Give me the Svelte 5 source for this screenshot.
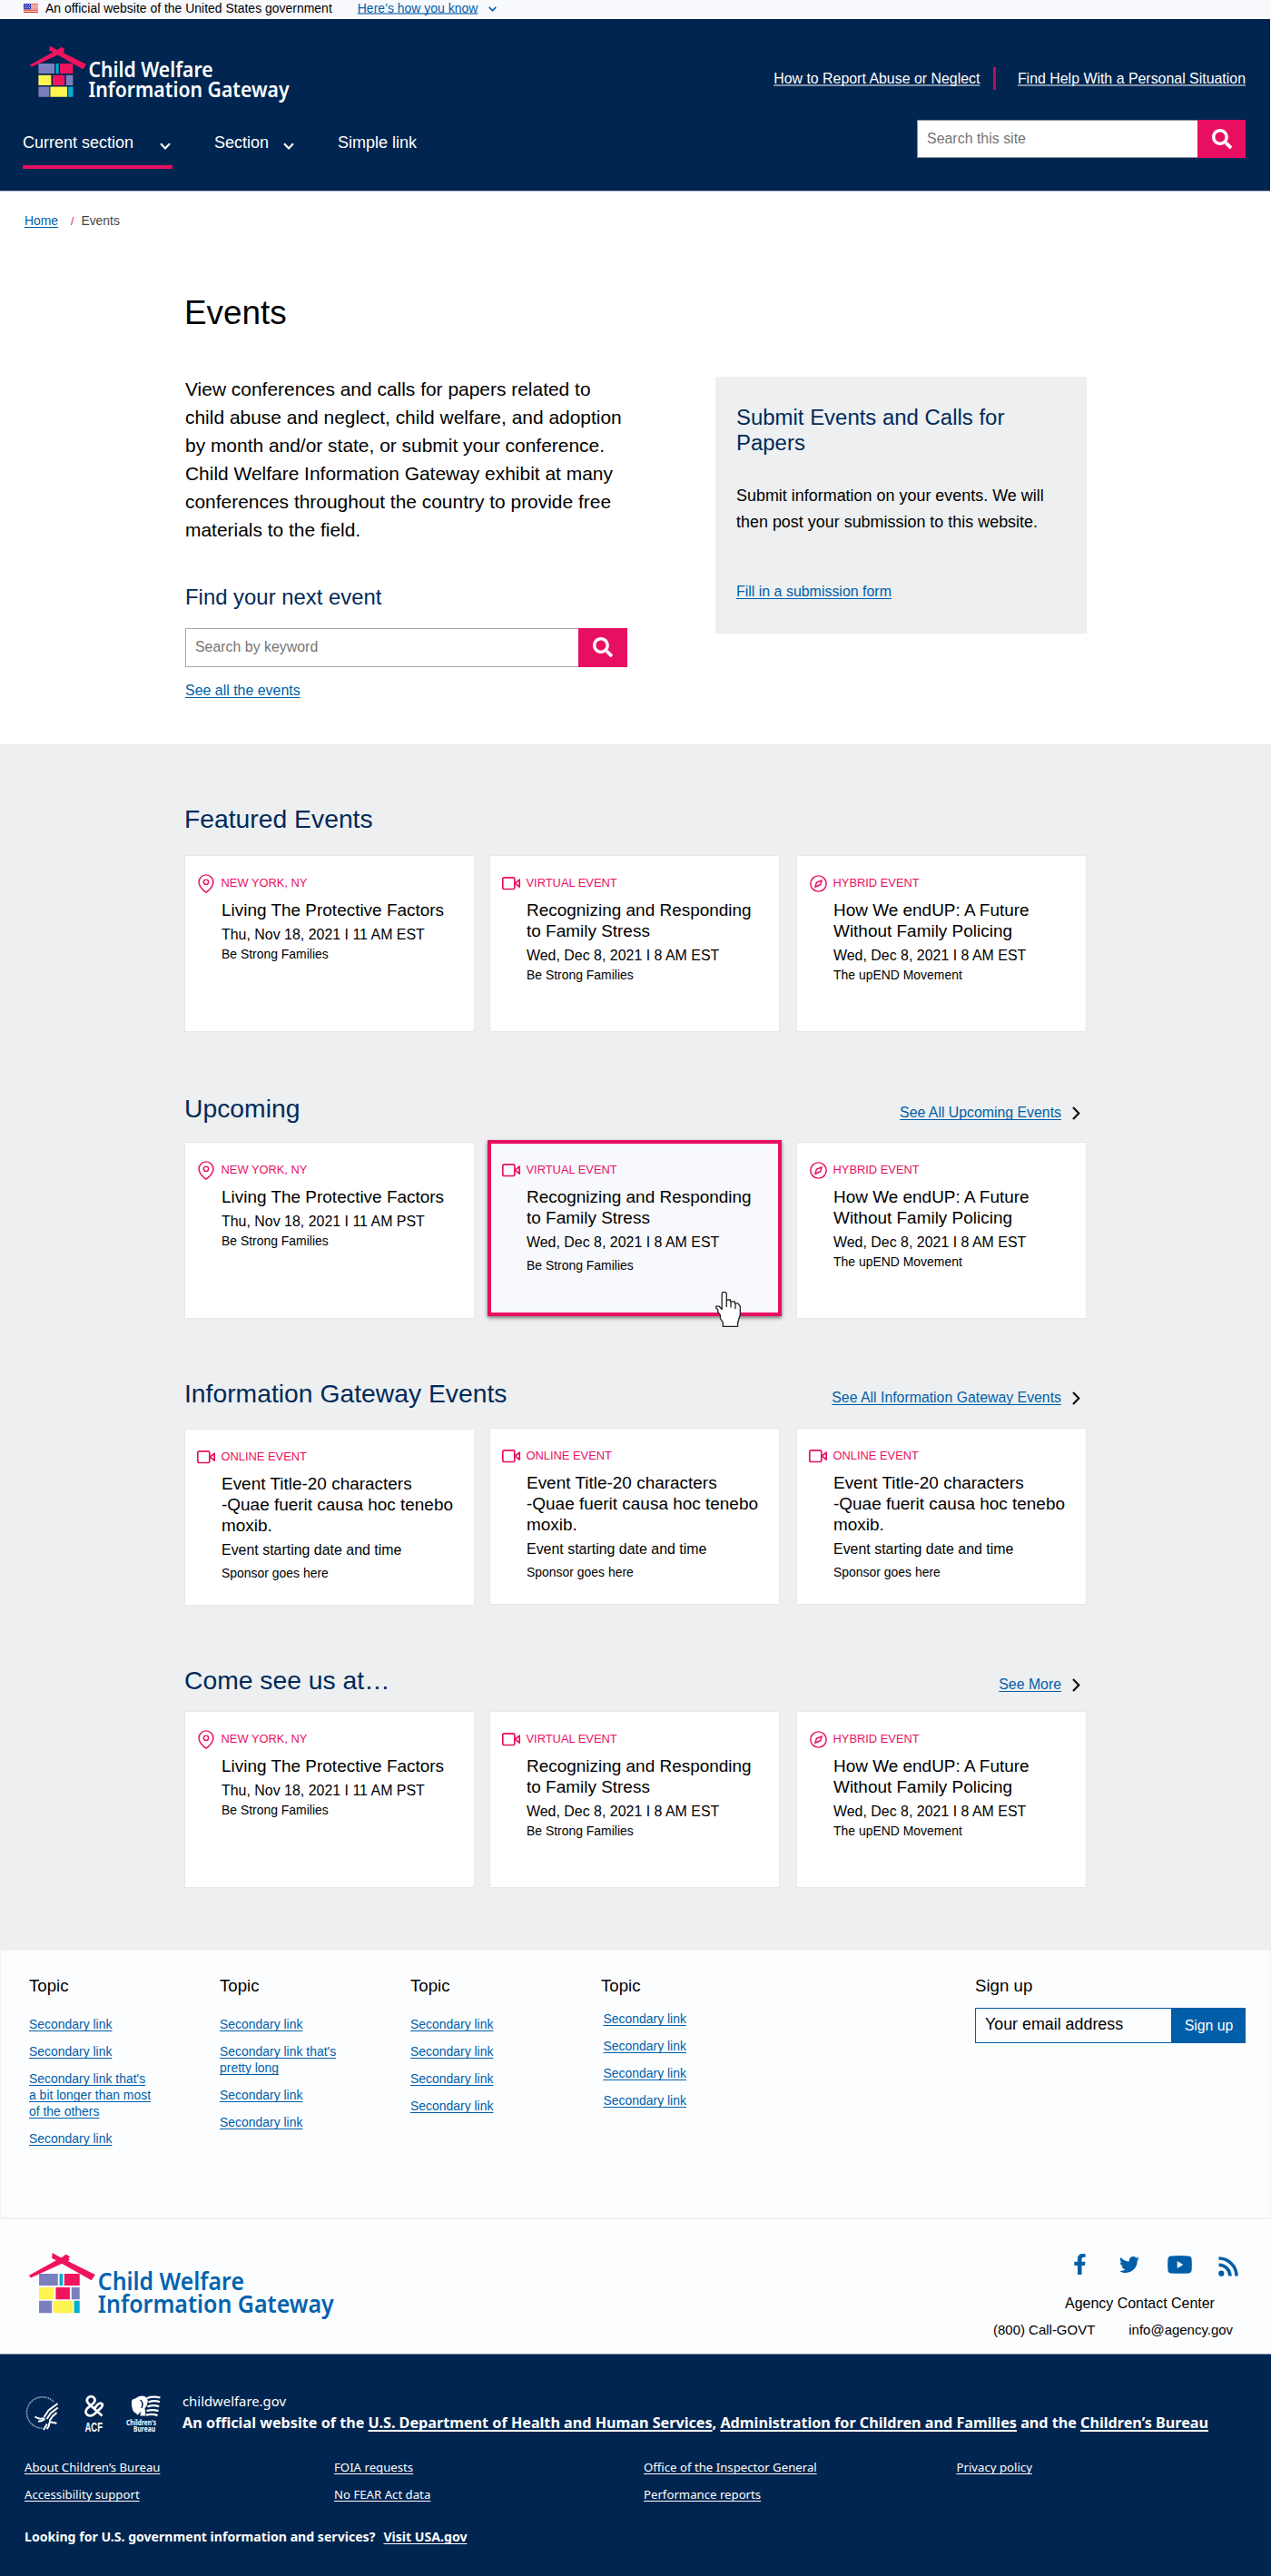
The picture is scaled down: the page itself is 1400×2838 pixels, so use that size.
<script>
  const ny = (zone) => ({
    kind: 'pin', label: 'NEW YORK, NY', title: 'Living The Protective Factors',
    date: `Thu, Nov 18, 2021 I 11 AM ${zone}`, sponsor: 'Be Strong Families'
  });
  const virtual = {
    kind: 'video', label: 'VIRTUAL EVENT', title: 'Recognizing and Responding\nto Family Stress',
    date: 'Wed, Dec 8, 2021 I 8 AM EST', sponsor: 'Be Strong Families'
  };
  const hybrid = {
    kind: 'compass', label: 'HYBRID EVENT', title: 'How We endUP: A Future\nWithout Family Policing',
    date: 'Wed, Dec 8, 2021 I 8 AM EST', sponsor: 'The upEND Movement'
  };
  const online = {
    kind: 'video', label: 'ONLINE EVENT', title: 'Event Title-20 characters\n-Quae fuerit causa hoc tenebo\nmoxib.',
    date: 'Event starting date and time', sponsor: 'Sponsor goes here'
  };

  const groups = [
    { id: 'featured', heading: 'Featured Events', more: '', events: [ny('EST'), virtual, hybrid] },
    { id: 'upcoming', heading: 'Upcoming', more: 'See All Upcoming Events', events: [ny('PST'), { ...virtual, active: true }, hybrid] },
    { id: 'gateway', heading: 'Information Gateway Events', more: 'See All Information Gateway Events', events: [online, online, online] },
    { id: 'visit', heading: 'Come see us at…', more: 'See More', events: [ny('PST'), virtual, hybrid] }
  ];

  const s = 'Secondary link';
  const topics = [
    [s, s, "Secondary link that's\na bit longer than most\nof the others", s],
    [s, "Secondary link that's\npretty long", s, s],
    [s, s, s, s],
    [s, s, s, s]
  ];

  const legal = [
    ['About Children’s Bureau', 'Accessibility support'],
    ['FOIA requests', 'No FEAR Act data'],
    ['Office of the Inspector General', 'Performance reports'],
    ['Privacy policy']
  ];
</script>

{#snippet logo(cls)}
  <svg class="logo {cls}" viewBox="33 48 290 67" role="img" aria-label="Child Welfare Information Gateway">
    <g fill="#f0145f">
      <path d="M33 71.5 34.6 73.8 71 57.3 70 55.6 71.4 54 67.6 51.8 64.6 54 Z" />
      <path d="M54.8 50.4 62 54.4 95 70.8 91.4 76.2 59.5 58.2 54.4 55.4Z" />
      <path d="M66 70h14.4v11H66zM58 82.7h13.2V94H58z" />
    </g>
    <path fill="#7c7fbe" d="M42.4 70H60v11H42.4zM72.8 82.7h7.6V94h-7.6zM42.4 95.4h12v11.4h-12z" />
    <path fill="#fff450" d="M42.4 82.7h14V94h-14zM55.4 95.4h18.7v11.4H55.4z" />
    <path fill="#00aed6" d="M61.5 70h3.2v11h-3.2zM75.2 95.4h5.2v11.4h-5.2z" />
    <text x="97.5" y="85" textLength="137" lengthAdjust="spacingAndGlyphs">Child Welfare</text>
    <text x="97.5" y="106.7" textLength="221" lengthAdjust="spacingAndGlyphs">Information Gateway</text>
  </svg>
{/snippet}

{#snippet chevron(cls)}
  <svg class={cls} viewBox="0 0 12 8" aria-hidden="true"><path d="M1 1.2 6 6.4 11 1.2" fill="none" stroke="currentColor" stroke-width="2.1" /></svg>
{/snippet}

{#snippet search()}
  <svg class="glass" viewBox="0 0 512 512" aria-hidden="true"><path fill="#fff" d="M505 442.700L405.300 343c-4.500-4.500-10.600-7-17-7H372c27.600-35.300 44-79.700 44-128C416 93.100 322.900 0 208 0S0 93.100 0 208s93.100 208 208 208c48.300 0 92.700-16.400 128-44v16.300c0 6.400 2.500 12.500 7 17l99.700 99.700c9.400 9.400 24.600 9.400 33.900 0l28.300-28.300c9.400-9.400 9.400-24.600.1-34zM208 336c-70.700 0-128-57.200-128-128 0-70.700 57.200-128 128-128 70.700 0 128 57.200 128 128 0 70.700-57.200 128-128 128z" /></svg>
{/snippet}

{#snippet kindIcon(kind)}
  <span class="kind">
    {#if kind === 'pin'}
      <svg width="18" height="21" viewBox="2 0 20 24"><path d="M21 10c0 7-9 13-9 13s-9-6-9-13a9 9 0 0 1 18 0z" /><circle cx="12" cy="10" r="3" /></svg>
    {:else if kind === 'video'}
      <svg width="20" height="15" viewBox="0 0 20 15"><rect x=".8" y=".9" width="13" height="12.600" rx="1.500" /><path d="m19.200 3.200-4.800 4 4.800 4z" /></svg>
    {:else}
      <svg width="19" height="19" viewBox="1 1 22 22"><circle cx="12" cy="12" r="10" /><path d="m16.200 7.800-1.600 5.600-6.800 2.900 1.800-5.700z" /></svg>
    {/if}
  </span>
{/snippet}

<div class="page">
  <div class="banner">
    <svg class="flag" width="16" height="11" viewBox="0 0 16 11" aria-hidden="true">
      <path fill="#fff" d="M0 0h16v11H0z" />
      <path fill="#e0351f" d="M0 0h16v1.100H0zM0 2.200h16v1.100H0zM0 4.400h16v1.100H0zM0 6.600h16v1.100H0zM0 8.800h16v1.100H0z" />
      <path fill="#2432ae" d="M0 0h8v6.200H0z" />
      <path fill="#fff" d="M1 1h1v1H1zM3.500 1h1v1h-1zM6 1h1v1H6zM2.200 2.700h1v1h-1zM4.800 2.700h1v1h-1zM1 4.300h1v1H1zM3.500 4.300h1v1h-1zM6 4.300h1v1H6z" />
    </svg>
    <span>An official website of the United States government</span>
    <a href="#know">Here’s how you know</a>
    {@render chevron('tiny')}
  </div>

  <header>
    <div class="brand">
      {@render logo('light')}
      <nav>
        <a class="current" href="#current">Current section {@render chevron('drop')}</a>
        <a class="section" href="#section">Section {@render chevron('drop')}</a>
        <a href="#simple">Simple link</a>
      </nav>
    </div>
    <div class="tools">
      <div class="help">
        <a href="#report">How to Report Abuse or Neglect</a>
        <i></i>
        <a href="#help">Find Help With a Personal Situation</a>
      </div>
      <div class="search site">
        <span class="field">Search this site</span>
        <button aria-label="Search">{@render search()}</button>
      </div>
    </div>
  </header>

  <main>
    <section class="intro">
      <div class="crumbs"><a href="#home">Home</a><i>/</i><span>Events</span></div>
      <h1>Events</h1>
      <div class="split">
        <div class="about">
          <p>View conferences and calls for papers related to child abuse and neglect, child welfare, and adoption by month and/or state, or submit your conference. Child Welfare Information Gateway exhibit at many conferences throughout the country to provide free materials to the field.</p>
          <h3>Find your next event</h3>
          <div class="search keyword">
            <span class="field">Search by keyword</span>
            <button aria-label="Search">{@render search()}</button>
          </div>
          <a class="all" href="#all">See all the events</a>
        </div>
        <aside>
          <h3>Submit Events and Calls for Papers</h3>
          <p>Submit information on your events. We will then post your submission to this website.</p>
          <a href="#form">Fill in a submission form</a>
        </aside>
      </div>
    </section>

    <div class="listing">
      {#each groups as group}
        <section class="group {group.id}">
          <div class="head">
            <h2>{group.heading}</h2>
            {#if group.more}
              <div class="more">
                <a href="#{group.id}">{group.more}</a>
                <svg width="9" height="15" viewBox="0 0 9 15" aria-hidden="true"><path d="M1 1l6.300 6.500L1 14" fill="none" stroke="#111" stroke-width="2.200" /></svg>
              </div>
            {/if}
          </div>
          <div class="cards">
            {#each group.events as event}
              <article class="card" class:active={event.active}>
                <div class="label">{@render kindIcon(event.kind)}<span>{event.label}</span></div>
                <div class="body">
                  <h4>{event.title}</h4>
                  <p class="date">{event.date}</p>
                  <p class="sponsor">{event.sponsor}</p>
                </div>
                {#if event.active}
                  <svg class="pointer" viewBox="0 0 28 39" aria-hidden="true">
                    <path d="M8.300 38.300V34L5.500 29.500V26L2.800 22.500V20L.8 18v-1.800h3.400L7.200 19.500V2.200L8.200.7h3L12.300 2.200V9h4.200v1.800h4.800v2h3.500L27.300 16v9.500l-1.300 4-1.400 5.500v3.300z" fill="#fff" stroke="#222" stroke-width="1.300" stroke-linejoin="round" />
                    <path d="M12.300 9v8M17 11v6.500M22 13v6" fill="none" stroke="#222" stroke-width="1.300" />
                  </svg>
                {/if}
              </article>
            {/each}
          </div>
        </section>
      {/each}
    </div>
  </main>

  <footer>
    <div class="topics">
      {#each topics as links}
        <div class="topic">
          <h5>Topic</h5>
          <ul>
            {#each links as link}<li><a href="#topic">{link}</a></li>{/each}
          </ul>
        </div>
      {/each}
      <form class="signup">
        <h5>Sign up</h5>
        <div class="row"><span>Your email address</span><button type="button">Sign up</button></div>
      </form>
    </div>

    <div class="agency">
      {@render logo('blue')}
      <div class="contact">
        <div class="social">
          <svg class="fb" viewBox="22 0 276 512"><path d="M279.140 288l14.220-92.660h-88.910v-60.130c0-25.350 12.420-50.060 52.240-50.060h40.420V6.260S260.430 0 225.360 0c-73.220 0-121.080 44.380-121.080 124.720v70.620H22.890V288h81.390v224h100.170V288z" /></svg>
          <svg class="tw" viewBox="0 48 512 416"><path d="M459.370 151.716c.325 4.548.325 9.097.325 13.645 0 138.720-105.583 298.558-298.558 298.558-59.452 0-114.680-17.219-161.137-47.106 8.447.974 16.568 1.299 25.340 1.299 49.055 0 94.213-16.568 130.274-44.832-46.132-.975-84.792-31.188-98.112-72.772 6.498.974 12.995 1.624 19.818 1.624 9.421 0 18.843-1.300 27.614-3.573-48.081-9.747-84.143-51.980-84.143-102.985v-1.299c13.969 7.797 30.214 12.670 47.431 13.319-28.264-18.843-46.781-51.005-46.781-87.391 0-19.492 5.197-37.360 14.294-52.954 51.655 63.675 129.300 105.258 216.365 109.807-1.624-7.797-2.599-15.918-2.599-24.040 0-57.828 46.782-104.934 104.934-104.934 30.213 0 57.502 12.670 76.670 33.137 23.715-4.548 46.456-13.320 66.599-25.340-7.798 24.366-24.366 44.833-46.132 57.827 21.117-2.273 41.584-8.122 60.426-16.243-14.292 20.791-32.161 39.308-52.628 54.253z" /></svg>
          <svg class="yt" viewBox="0 0 27 20"><path fill-rule="evenodd" d="M4 .5Q13.500-.3 23 .5q3.300.3 3.600 3.500.5 6 0 12-.3 3.200-3.600 3.500-9.500.7-19 0Q.7 19.200.4 16q-.5-6 0-12Q.7.8 4 .5zM10.700 6v8l6.600-4z" /></svg>
          <svg class="rss" viewBox="0 0 22 22"><circle cx="3.300" cy="18.700" r="3.100" /><path d="M.5 9.200A12.300 12.300 0 0 1 12.900 21.500M.5 2A19.500 19.500 0 0 1 20 21.500" fill="none" stroke="#005ea8" stroke-width="3.600" /></svg>
        </div>
        <p class="center">Agency Contact Center</p>
        <p class="reach"><span>(800) Call-GOVT</span><span>info@agency.gov</span></p>
      </div>
    </div>

    <div class="identifier">
      <div class="owner">
        <svg class="hhs" width="37" height="38" viewBox="0 0 37 38" aria-hidden="true" fill="none" stroke="#fff">
          <path d="M31 6A17.200 17.200 0 1 0 19 35.200" stroke="#9fb0c8" stroke-width="1.600" stroke-dasharray="1.300 .8" />
          <path d="M35.500 8 25.500 15.500 20.500 23M35.800 12.500 28 18.500 23.500 25M34.500 18 30 22 26.500 27M10.500 22.500q5 3.500 10 1.500M14 27.500q5 .5 7.500-3M20 37l3.800-6.500M23.500 36q2.500-2 3-7M26 28l8.500 1.700" stroke-width="2" />
        </svg>
        <svg class="acf" width="24" height="46" viewBox="0 0 24 46" aria-hidden="true">
          <path d="M20.500 22.500 5.500 9Q2.300 5.200 5 2.600 8.300-.2 11.500 2.600 14 5.600 10.500 9L4 14.500Q.8 18.500 4 21.300 8 24 12 20.500L19.500 13.500Q22.800 9.200 18.800 8.600 15.500 8.800 12.600 14" fill="none" stroke="#fff" stroke-width="2.700" />
          <text x="1.500" y="39.500" textLength="19.500" lengthAdjust="spacingAndGlyphs">ACF</text>
        </svg>
        <svg class="bureau" width="39" height="46" viewBox="0 0 39 46" aria-hidden="true">
          <path fill="#fff" d="M6 9Q5 4 10 3.500 15-.5 20 1q4.500 1.500 3.500 7-.5 4-3 6l1 8.500h-6l.5-5Q11.500 24 11.500 20 6 18.500 6 9z" />
          <path d="M15.500 5q4 3 1.500 9" fill="none" stroke="#002550" stroke-width="1.500" />
          <path d="M23 3q7-2.500 14.500-.5M24.500 7.500q6.500-2.500 12.500-.2M23.500 12.300q7-2.200 12.700 0M22.500 17q7-2 13 .2M22 21.700q7-1.700 12.500.4" fill="none" stroke="#fff" stroke-width="2.300" />
          <text x="0" y="33.200" textLength="33" lengthAdjust="spacingAndGlyphs">Children's</text>
          <text x="8" y="40" textLength="24" lengthAdjust="spacingAndGlyphs">Bureau</text>
        </svg>
        <div class="statement">
          <p class="domain">childwelfare.gov</p>
          <p class="official">An official website of the <a href="#hhs">U.S. Department of Health and Human Services</a>, <a href="#acf">Administration for Children and Families</a> and the <a href="#cb">Children’s Bureau</a></p>
        </div>
      </div>
      <div class="legal">
        {#each legal as column}
          <div>{#each column as item}<a href="#legal">{item}</a>{/each}</div>
        {/each}
      </div>
      <p class="usa"><span>Looking for U.S. government information and services?</span><a href="#usa">Visit USA.gov</a></p>
    </div>
  </footer>
</div>

<style>
  :global(body) { margin: 0; background: #fff; }
  .page {
    width: 1400px; height: 2838px;
    font-family: "Liberation Sans", Arial, sans-serif; color: #000;
  }
  h1, h2, h3, h4, h5, p, ul { margin: 0; padding: 0; font-weight: 400; }
  ul { list-style: none; }
  i { font-style: normal; }
  svg { display: block; flex: none; overflow: visible; }
  a { color: #005ea8; text-decoration: underline 1px; text-underline-offset: 2px; text-decoration-skip-ink: none; }
  button { border: 0; padding: 0; margin: 0; font: inherit; }

  .banner { display: flex; align-items: flex-start; height: 21px; padding-left: 26px; background: #f8f9fc; font-size: 13.980px; line-height: 18px; white-space: nowrap; }
  .flag { margin: 4px 8px 0 0; }
  .banner a { margin-left: 28px; text-decoration-color: #6d9fca; text-decoration-thickness: 2px; text-underline-offset: 0; }
  .tiny { width: 9px; height: 6px; margin: 7px 0 0 12px; color: #005ea8; }

  header { display: flex; justify-content: space-between; height: 189px; margin-right: 1px; padding: 0 27px 0 25px; background: #002550; border-bottom: 1px solid #a9b4d0; }
  .logo text { font-family: "Noto Sans", sans-serif; font-weight: 600; font-size: 22.500px; }
  .light { width: 290px; height: 67px; margin: 27px 0 0 8px; }
  .light text { fill: #fff; }
  .blue { width: 341px; height: 79px; margin-top: 34px; }
  .blue text { fill: #0063ad; }
  nav { display: flex; margin-top: 30px; font-size: 18px; line-height: 24px; }
  nav a { display: flex; color: #fff; text-decoration: none; white-space: nowrap; }
  .drop { width: 12px; height: 8px; margin-top: 12px; }
  .current { justify-content: space-between; width: 163px; padding: 0 2px 13px 0; margin-right: 46px; border-bottom: 4.500px solid #e80f62; }
  .section { width: 88px; justify-content: space-between; margin-right: 48px; }
  .tools { padding-top: 53px; }
  .help { display: flex; align-items: center; justify-content: flex-end; height: 25px; font-size: 15.920px; line-height: 20px; }
  .help a { color: #fff; text-decoration: underline 2px #7f92a8; text-underline-offset: 1px; }
  .help i { width: 2.500px; height: 25px; margin: 0 24px 0 15px; background: #b31159; }
  .search { display: flex; box-sizing: border-box; }
  .search .field { flex: 1; box-sizing: border-box; background: #fff; border: 1.500px solid #b4b4b4; border-right: 0; color: #757575; }
  .search button { display: flex; align-items: center; justify-content: center; background: #e80f62; }
  .site { width: 362px; height: 42px; margin: 33px 0 0 auto; }
  .site .field { padding-left: 10px; font-size: 15.940px; line-height: 40px; border-color: #8a8f98; }
  .site button { width: 53px; }
  .glass { width: 22px; height: 22px; }

  .intro { height: 609px; box-sizing: border-box; padding-top: 22px; }
  .crumbs { display: flex; height: 20px; padding-left: 27px; font-size: 13.900px; line-height: 20px; }
  .crumbs i { margin: 0 8px 0 14px; color: #e80f62; font-size: 12px; line-height: 22px; }
  .crumbs span { color: #444; }
  h1 { margin: 70px 0 0 203px; font-size: 36.900px; line-height: 44px; }
  .split { display: flex; justify-content: space-between; width: 993px; margin: 46px 0 0 204px; }
  .about { width: 487px; }
  .about p { width: 484px; font-size: 20.950px; line-height: 31px; }
  h3, h2 { color: #002a59; }
  .about h3 { margin-top: 45px; font-size: 23.900px; line-height: 28px; }
  .keyword { height: 42.500px; margin-top: 20px; }
  .keyword .field { padding-left: 10px; font-size: 15.920px; line-height: 39px; border-color: #a8a8a8; }
  .keyword button { width: 54px; }
  .all { display: block; width: max-content; margin-top: 16.500px; font-size: 15.950px; line-height: 20px; }
  aside { box-sizing: border-box; width: 409px; height: 283px; margin-top: 2px; padding: 31px 23px 0; background: #edeff0; }
  aside h3 { font-size: 23.950px; line-height: 28px; }
  aside p { margin-top: 29.500px; font-size: 17.950px; line-height: 29px; }
  aside a { display: block; width: max-content; margin-top: 52px; font-size: 15.940px; line-height: 20px; }

  .listing { box-sizing: border-box; height: 1328px; padding: 65px 203px 0; background: #edeff0; }
  .head { display: flex; justify-content: space-between; align-items: baseline; height: 34px; }
  h2 { font-size: 28.300px; line-height: 34px; }
  .more { display: flex; align-items: center; gap: 12px; padding-right: 7px; font-size: 15.850px; line-height: 20px; }
  .cards { display: grid; grid-template-columns: 336px 338px 320px; height: 195px; margin-top: 23px; }
  .upcoming { margin-top: 67px; }
  .upcoming .cards { margin-top: 20px; }
  .gateway { margin-top: 65px; }
  .gateway .cards { margin-top: 21px; }
  .gateway .card:first-child { margin-top: 1px; }
  .visit { margin-top: 66px; }
  .visit .cards { margin-top: 17px; }
  .card { position: relative; box-sizing: border-box; width: 320px; height: 195px; padding: 21px 0 0 11px; background: #fff; border: 1px solid #e6e8e9; }
  .card.active { width: 324px; height: 194px; margin: -2px 0 0 -2px; padding: 20px 0 0 10px; background: #f8f9fc; border: 4px solid #e80f62; box-shadow: 0 2px 4px rgba(0, 0, 0, .5); }
  .label { display: flex; align-items: center; height: 18px; color: #e80f62; font-size: 12.880px; line-height: 18px; }
  .kind { display: flex; justify-content: center; width: 24px; margin-right: 4.500px; }
  .kind svg { fill: none; stroke: #e80f62; stroke-width: 1.700; stroke-linejoin: round; }
  .body { padding: 9px 0 0 29px; }
  h4 { font-size: 18.970px; line-height: 23px; white-space: pre-line; }
  .date { margin-top: 5.500px; font-size: 15.950px; line-height: 20px; }
  .sponsor { margin-top: 2.500px; font-size: 13.950px; line-height: 18px; }
  .active .sponsor, .gateway .sponsor { margin-top: 6.500px; }
  .pointer { position: absolute; left: 247px; top: 163px; width: 28px; height: 39px; }

  footer { background: #fcfdff; }
  .topics { display: flex; box-sizing: border-box; height: 297px; padding: 27px 27px 0 31px; border: 1px solid #f0f2f4; border-bottom: 2px solid #f0f1f3; }
  .topic { width: 210px; }
  h5 { font-size: 18.670px; line-height: 24px; }
  li { font-size: 13.950px; line-height: 18px; margin-bottom: 12px; white-space: pre-line; }
  .topic ul { margin-top: 21px; }
  .topic:nth-child(4) ul { margin: 15px 0 0 2.500px; }
  .signup { width: 298px; margin-left: auto; }
  .signup .row { display: flex; height: 39px; margin-top: 12px; }
  .row span { flex: 1; box-sizing: border-box; padding-left: 10px; border: 1px solid #005ea8; font-size: 17.850px; line-height: 35px; }
  .row button { width: 81px; background: #005ea8; color: #fff; font-size: 15.800px; }
  .agency { display: flex; justify-content: space-between; height: 149px; box-sizing: border-box; padding: 0 28px 0 32px; border-bottom: 1px solid #8595aa; }
  .contact { width: 278px; padding-top: 36px; }
  .social { display: flex; align-items: center; height: 27px; padding-left: 89px; fill: #005ea8; }
  .fb { width: 13px; height: 23px; margin-right: 37px; }
  .tw { width: 22px; height: 18px; margin-right: 31px; }
  .yt { width: 27px; height: 20px; margin-right: 29px; }
  .rss { width: 22px; height: 22px; margin-top: 4px; }
  .center { margin: 20px 0 0 79px; font-size: 15.960px; line-height: 20px; }
  .reach { display: flex; gap: 37px; margin-top: 9px; font-size: 14.970px; line-height: 20px; }

  .identifier { height: 244px; box-sizing: border-box; padding: 41px 0 0 27px; background: #002550; color: #fff; font-family: "Noto Sans", sans-serif; }
  .identifier a { color: #fff; }
  .owner { display: flex; align-items: flex-start; height: 50px; }
  .hhs { margin: 5px 0 0 1px; }
  .acf { margin: 4px 0 0 27px; }
  .acf text { font: 700 15.500px "Liberation Sans", sans-serif; fill: #fff; }
  .bureau { margin: 4px 0 0 23px; }
  .bureau text { font: 700 8px "Noto Sans", sans-serif; fill: #fff; }
  .statement { margin-left: 23px; white-space: nowrap; }
  .domain { font-size: 14.850px; line-height: 20px; }
  .official { margin-top: 2px; font-size: 16.170px; font-weight: 700; line-height: 24px; }
  .official a { text-decoration-thickness: 2px; }
  .legal { display: grid; grid-template-columns: 341px 341px 344.500px 1fr; height: 50px; margin-top: 23px; font-size: 13.200px; line-height: 20px; }
  .legal div { display: flex; flex-direction: column; align-items: flex-start; gap: 10px; }
  .usa { display: flex; gap: 9px; margin-top: 26.500px; font-size: 14.100px; font-weight: 700; line-height: 20px; }
</style>
